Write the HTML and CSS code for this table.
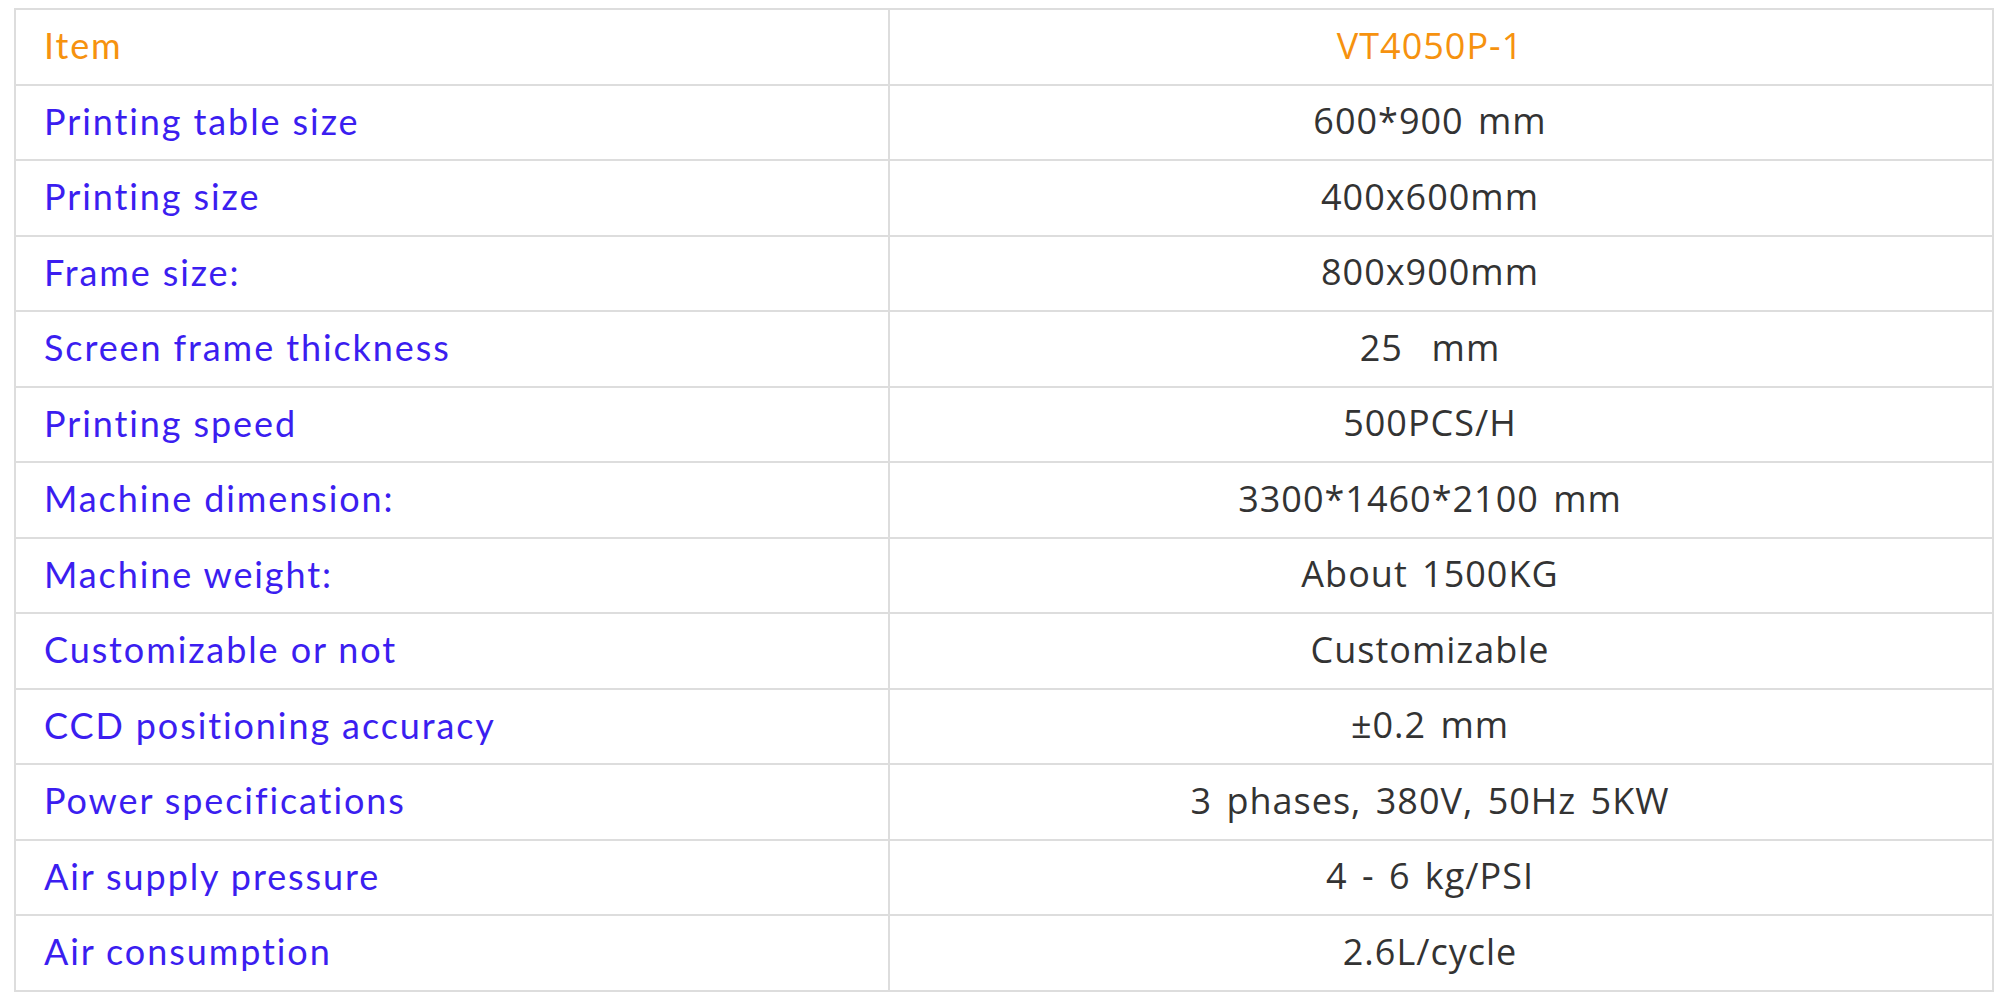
FILE: index.html
```html
<!DOCTYPE html>
<html>
<head>
<meta charset="utf-8">
<link rel="stylesheet" href="styles.css">
</head>
<body>
<table class="spec">
  <colgroup><col class="c-label"><col class="c-value"></colgroup>
  <tr class="head"><td class="label">Item</td><td class="value">VT4050P-1</td></tr>
  <tr><td class="label">Printing table size</td><td class="value">600*900 mm</td></tr>
  <tr><td class="label">Printing size</td><td class="value">400x600mm</td></tr>
  <tr><td class="label">Frame size:</td><td class="value">800x900mm</td></tr>
  <tr><td class="label">Screen frame thickness</td><td class="value">25&nbsp;&nbsp;mm</td></tr>
  <tr><td class="label">Printing speed</td><td class="value">500PCS/H</td></tr>
  <tr><td class="label">Machine dimension:</td><td class="value">3300*1460*2100 mm</td></tr>
  <tr><td class="label">Machine weight:</td><td class="value">About 1500KG</td></tr>
  <tr><td class="label">Customizable or not</td><td class="value">Customizable</td></tr>
  <tr><td class="label">CCD positioning accuracy</td><td class="value">±0.2 mm</td></tr>
  <tr><td class="label">Power specifications</td><td class="value">3 phases, 380V, 50Hz 5KW</td></tr>
  <tr><td class="label">Air supply pressure</td><td class="value">4 - 6 kg/PSI</td></tr>
  <tr><td class="label">Air consumption</td><td class="value">2.6L/cycle</td></tr>
</table>
</body>
</html>
```
FILE: styles.css
```css
html, body {
  margin: 0;
  background: #ffffff;
}
body {
  padding: 8px 0 0 14px;
}
.spec {
  border-collapse: collapse;
  width: 1980px;
  table-layout: fixed;
}
.c-label { width: 874px; }
.spec tr { height: 75.5px; }
.spec td {
  border: 2px solid #dddddd;
  padding: 0 0 3px 28px;
  vertical-align: middle;
  white-space: nowrap;
}
.label {
  font-family: Lato, "Open Sans", sans-serif;
  font-size: 36px;
  letter-spacing: 1.9px;
  color: #3b1ef0;
}
.value {
  font-family: "Open Sans", sans-serif;
  font-size: 36px;
  letter-spacing: 1px;
  word-spacing: 4px;
  color: #333333;
  text-align: center;
}
.spec td.value { padding: 0 22px 3px 0; }
.head .label, .head .value {
  color: #f6920f;
}
```
